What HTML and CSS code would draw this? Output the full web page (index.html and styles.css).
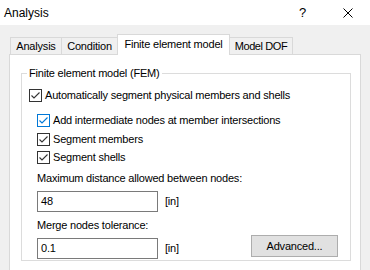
FILE: index.html
```html
<!DOCTYPE html>
<html lang="en">
<head>
    <meta charset="UTF-8">
    <title>Analysis</title>
    <link rel="stylesheet" href="styles.css">
</head>
<body>
    <!-- title bar -->
    <div class="titlebar">
        <span class="title">Analysis</span>
        <span class="ctrl help">?</span>
        <span class="ctrl close">
            <svg width="10" height="10" viewBox="0 0 10 10"><path d="M0.5 0.5 L9.5 9.5 M9.5 0.5 L0.5 9.5" stroke="#000" stroke-width="1" fill="none"/></svg>
        </span>
    </div>

    <div class="dialog">
        <div class="tabs">
            <div class="tab tab-analysis">Analysis</div>
            <div class="tab tab-condition">Condition</div>
            <div class="tab tab-fem active">Finite element model</div>
            <div class="tab tab-dof">Model DOF</div>
        </div>

        <div class="panel">
            <fieldset class="group">
                <legend>Finite element model (FEM)</legend>

                <div class="check-row first">
                    <span class="box"><svg width="11" height="11" viewBox="0 0 11 11"><path d="M1.5 5.5 L4 8 L9.5 2.5" stroke="#333" stroke-width="1.1" fill="none"/></svg></span>
                    <span>Automatically segment physical members and shells</span>
                </div>

                <div class="sub">
                    <div class="check-row second">
                        <span class="box focus"><svg width="11" height="11" viewBox="0 0 11 11"><path d="M1.5 5.5 L4 8 L9.5 2.5" stroke="#0078d7" stroke-width="1.1" fill="none"/></svg></span>
                        <span>Add intermediate nodes at member intersections</span>
                    </div>
                    <div class="check-row third">
                        <span class="box"><svg width="11" height="11" viewBox="0 0 11 11"><path d="M1.5 5.5 L4 8 L9.5 2.5" stroke="#333" stroke-width="1.1" fill="none"/></svg></span>
                        <span>Segment members</span>
                    </div>
                    <div class="check-row">
                        <span class="box"><svg width="11" height="11" viewBox="0 0 11 11"><path d="M1.5 5.5 L4 8 L9.5 2.5" stroke="#333" stroke-width="1.1" fill="none"/></svg></span>
                        <span>Segment shells</span>
                    </div>

                    <div class="field-label">Maximum distance allowed between nodes:</div>
                    <div class="field-row">
                        <div class="input">48</div>
                        <span class="unit">[in]</span>
                    </div>

                    <div class="field-label">Merge nodes tolerance:</div>
                    <div class="field-row">
                        <div class="input">0.1</div>
                        <span class="unit">[in]</span>
                        <button class="btn">Advanced...</button>
                    </div>
                </div>
            </fieldset>
        </div>
    </div>
</body>
</html>
```

FILE: styles.css
```css
/* 기본 */
html, body {
    margin: 0;
    padding: 0;
    height: 100%;
    overflow: hidden;
}

body {
    background-color: #f0f0f0;
    font-family: "Liberation Sans", Arial, sans-serif;
    font-size: 11px;
    letter-spacing: -0.2px;
    color: #000;
}

/* 타이틀 바 */
.titlebar {
    display: flex;
    align-items: center;
    height: 25px;
    background-color: #fff;
}

.title {
    flex: 1;
    padding-left: 4px;
    font-size: 12px;
    letter-spacing: 0;
}

.ctrl {
    display: flex;
    align-items: center;
    justify-content: center;
    width: 45px;
    height: 25px;
}

.help {
    font-size: 13px;
}

/* 탭 */
.dialog {
    padding: 9px 9px 0 9px;
}

.tabs {
    display: flex;
    align-items: flex-end;
    height: 20px;
    padding-left: 1px;
    position: relative;
    z-index: 1;
}

.tab {
    height: 17px;
    line-height: 17px;
    text-align: center;
    border: 1px solid #d9d9d9;
    border-bottom: none;
    border-right: none;
    background-color: #f0f0f0;
    box-sizing: border-box;
}

.tab-analysis { width: 51px; }
.tab-condition { width: 56px; }
.tab-fem { width: 113px; }
.tab-dof { width: 63px; letter-spacing: -0.4px; }

.tab.active {
    height: 21px;
    line-height: 19px;
    margin-bottom: -1px;
    background-color: #fff;
    border-right: 1px solid #d9d9d9;
}

.tab.active + .tab {
    border-left: none;
}

.tab-dof {
    border-right: 1px solid #d9d9d9;
}

/* 패널 */
.panel {
    height: 240px;
    background-color: #fff;
    border: 1px solid #d9d9d9;
    padding: 11px 9px 0 11px;
    box-sizing: border-box;
}

.group {
    margin: 0;
    padding: 0 0 1px 7px;
    border: 1px solid #dcdcdc;
}

.group legend {
    margin-left: -2px;
    padding: 0 2px;
    line-height: 14px;
}

/* 체크박스 */
.check-row {
    display: flex;
    align-items: center;
    height: 13px;
    line-height: 13px;
    margin-top: 5px;
}

.check-row.first {
    margin-top: 9px;
}

.check-row.second {
    margin-top: 12px;
}

.check-row.third {
    margin-top: 6px;
}

.box {
    display: flex;
    align-items: center;
    justify-content: center;
    width: 13px;
    height: 13px;
    margin-right: 3px;
    border: 1px solid #333;
    box-sizing: border-box;
}

.box.focus {
    border-color: #0078d7;
}

.sub {
    padding-left: 8px;
}

/* 입력 */
.field-label {
    margin-top: 7px;
    line-height: 14px;
}

.field-row {
    display: flex;
    align-items: flex-start;
    margin-top: 6px;
}

.field-row + .field-label {
    margin-top: 6px;
}

.input {
    width: 121px;
    height: 21px;
    line-height: 19px;
    padding-left: 3px;
    border: 1px solid #7a7a7a;
    box-sizing: border-box;
}

.unit {
    margin-left: 7px;
    line-height: 21px;
}

.btn {
    width: 87px;
    height: 22px;
    margin: -3px 12px 0 auto;
    padding: 0;
    font-family: inherit;
    font-size: 11px;
    letter-spacing: -0.2px;
    color: #000;
    background-color: #e1e1e1;
    border: 1px solid #adadad;
}
```
